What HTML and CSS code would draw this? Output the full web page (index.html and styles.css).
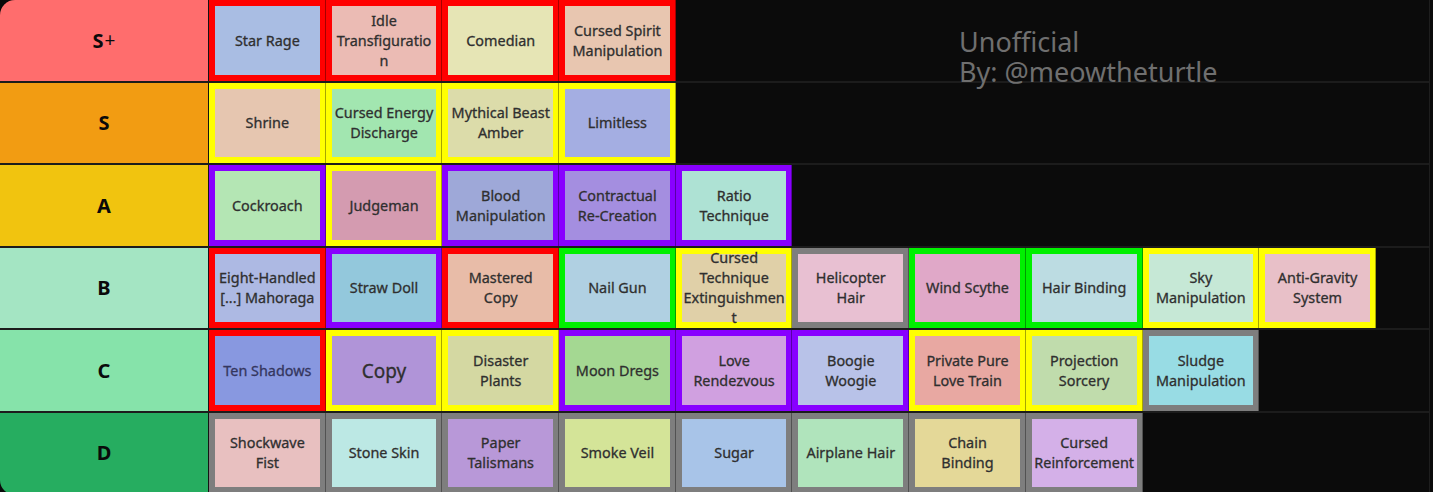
FILE: index.html
```html
<!DOCTYPE html>
<html lang="en">
<head>
<meta charset="utf-8">
<title>Tier List</title>
<link rel="stylesheet" href="styles.css">
</head>
<body>
<div class="board">
  <div class="watermark">
    <div class="wm-line">Unofficial</div>
    <div class="wm-line">By: @meowtheturtle</div>
  </div>

  <div class="row">
    <div class="label l-splus">S<span class="plus">+</span></div>
    <div class="items">
      <div class="tile b-red"><div class="inner t-star-rage">Star Rage</div></div>
      <div class="tile b-red"><div class="inner t-idle">Idle<br>Transfiguratio<br>n</div></div>
      <div class="tile b-red"><div class="inner t-comedian">Comedian</div></div>
      <div class="tile b-red"><div class="inner t-csm">Cursed Spirit<br>Manipulation</div></div>
    </div>
  </div>

  <div class="row">
    <div class="label l-s">S</div>
    <div class="items">
      <div class="tile b-yellow"><div class="inner t-shrine">Shrine</div></div>
      <div class="tile b-yellow"><div class="inner t-ced">Cursed Energy<br>Discharge</div></div>
      <div class="tile b-yellow"><div class="inner t-mba">Mythical Beast<br>Amber</div></div>
      <div class="tile b-yellow"><div class="inner t-limitless">Limitless</div></div>
    </div>
  </div>

  <div class="row">
    <div class="label l-a">A</div>
    <div class="items">
      <div class="tile b-purple"><div class="inner t-cockroach">Cockroach</div></div>
      <div class="tile b-yellow"><div class="inner t-judgeman">Judgeman</div></div>
      <div class="tile b-purple"><div class="inner t-blood">Blood<br>Manipulation</div></div>
      <div class="tile b-purple"><div class="inner t-contract">Contractual<br>Re-Creation</div></div>
      <div class="tile b-purple"><div class="inner t-ratio">Ratio<br>Technique</div></div>
    </div>
  </div>

  <div class="row">
    <div class="label l-b">B</div>
    <div class="items">
      <div class="tile b-red"><div class="inner t-mahoraga">Eight-Handled<br>[...] Mahoraga</div></div>
      <div class="tile b-purple"><div class="inner t-straw">Straw Doll</div></div>
      <div class="tile b-red"><div class="inner t-mastered">Mastered<br>Copy</div></div>
      <div class="tile b-green"><div class="inner t-nail">Nail Gun</div></div>
      <div class="tile b-yellow"><div class="inner t-cte">Cursed<br>Technique<br>Extinguishmen<br>t</div></div>
      <div class="tile b-gray"><div class="inner t-heli">Helicopter<br>Hair</div></div>
      <div class="tile b-green"><div class="inner t-wind">Wind Scythe</div></div>
      <div class="tile b-green"><div class="inner t-hairbind">Hair Binding</div></div>
      <div class="tile b-yellow"><div class="inner t-sky">Sky<br>Manipulation</div></div>
      <div class="tile b-yellow"><div class="inner t-antigrav">Anti-Gravity<br>System</div></div>
    </div>
  </div>

  <div class="row">
    <div class="label l-c">C</div>
    <div class="items">
      <div class="tile b-red"><div class="inner t-ten">Ten Shadows</div></div>
      <div class="tile b-yellow"><div class="inner t-copy">Copy</div></div>
      <div class="tile b-yellow"><div class="inner t-disaster">Disaster<br>Plants</div></div>
      <div class="tile b-purple"><div class="inner t-moon">Moon Dregs</div></div>
      <div class="tile b-purple"><div class="inner t-love">Love<br>Rendezvous</div></div>
      <div class="tile b-purple"><div class="inner t-boogie">Boogie<br>Woogie</div></div>
      <div class="tile b-yellow"><div class="inner t-pplt">Private Pure<br>Love Train</div></div>
      <div class="tile b-yellow"><div class="inner t-proj">Projection<br>Sorcery</div></div>
      <div class="tile b-gray"><div class="inner t-sludge">Sludge<br>Manipulation</div></div>
    </div>
  </div>

  <div class="row">
    <div class="label l-d">D</div>
    <div class="items">
      <div class="tile b-gray"><div class="inner t-shock">Shockwave<br>Fist</div></div>
      <div class="tile b-gray"><div class="inner t-stone">Stone Skin</div></div>
      <div class="tile b-gray"><div class="inner t-paper">Paper<br>Talismans</div></div>
      <div class="tile b-gray"><div class="inner t-smoke">Smoke Veil</div></div>
      <div class="tile b-gray"><div class="inner t-sugar">Sugar</div></div>
      <div class="tile b-gray"><div class="inner t-airplane">Airplane Hair</div></div>
      <div class="tile b-gray"><div class="inner t-chain">Chain<br>Binding</div></div>
      <div class="tile b-gray"><div class="inner t-reinf">Cursed<br>Reinforcement</div></div>
    </div>
  </div>
</div>
</body>
</html>
```

FILE: styles.css
```css
html, body {
  margin: 0;
  padding: 0;
  background: #0a0a0a;
}

.board {
  position: relative;
  width: 1429px;
  height: 495px;
  border-radius: 15px 0 0 15px;
  overflow: hidden;
  border-right: 1px solid #1e1e1e;
  background: #0b0b0b;
  font-family: "Noto Sans", "Open Sans", sans-serif;
}

.watermark {
  position: absolute;
  left: 959px;
  top: 27px;
  display: flex;
  flex-direction: column;
  gap: 1px;
  font-size: 27px;
  line-height: 29px;
  color: #6f6f6f;
  z-index: 2;
}

.row {
  display: flex;
  height: 82.5px;
  box-sizing: border-box;
  border-bottom: 2px solid #1c1c1c;
}

.label {
  flex: none;
  width: 208px;
  border-right: 1px solid #141414;
  display: flex;
  align-items: center;
  justify-content: center;
  font-weight: 700;
  font-size: 20px;
  color: #0a0a0a;
}

.label .plus {
  font-weight: 400;
  font-size: 19px;
  margin-left: 1px;
}

.l-splus { background: #ff6d6d; }
.l-s { background: #f29c12; }
.l-a { background: #f1c40f; }
.l-b { background: #a4e5c3; }
.l-c { background: #86e3aa; }
.l-d { background: #26ad60; }

.items {
  display: flex;
  height: 100%;
}

.tile {
  flex: none;
  width: 116.7px;
  height: 100%;
  box-sizing: border-box;
  padding: 6px 5px 6px 6px;
  border-right: 1px solid rgba(0, 0, 0, 0.35);
}

.b-red { background: #ff0000; }
.b-yellow { background: #ffff00; }
.b-purple { background: #8800ff; }
.b-green { background: #00f000; }
.b-gray { background: #7e7e7e; }

.inner {
  height: 100%;
  display: flex;
  align-items: center;
  justify-content: center;
  text-align: center;
  font-size: 14.4px;
  line-height: 20px;
  padding-top: 1px;
  box-sizing: border-box;
  color: #2f2f2f;
  -webkit-text-stroke: 0.3px #2f2f2f;
  overflow: visible;
  white-space: nowrap;
}

.t-star-rage { background: #a9bde3; }
.t-idle { background: #ebbbb4; }
.t-comedian { background: #e6e5b5; }
.t-csm { background: #e8c6b0; }

.t-shrine { background: #e6c6b0; }
.t-ced { background: #a2e6b0; }
.t-mba { background: #dcdcaa; }
.t-limitless { background: #a4aee2; }

.t-cockroach { background: #b4e6b4; }
.t-judgeman { background: #d49bb0; }
.t-blood { background: #9ea8d8; }
.t-contract { background: #a48ee0; }
.t-ratio { background: #aee2d4; }

.t-mahoraga { background: #adb9e3; }
.t-straw { background: #93c8dc; }
.t-mastered { background: #e8bca8; }
.t-nail { background: #b0d0e2; }
.t-cte { background: #e0d0a8; }
.t-heli { background: #e8c0d2; }
.t-wind { background: #e0a8c8; }
.t-hairbind { background: #bcdce2; }
.t-sky { background: #c6e8d6; }
.t-antigrav { background: #e8c0c8; }

.t-ten { background: #8898e0; color: #34365e; -webkit-text-stroke-color: #34365e; }
.t-copy { background: #b094d8; font-size: 19px; }
.t-disaster { background: #d4d8a2; }
.t-moon { background: #a4d892; }
.t-love { background: #d0a0e0; }
.t-boogie { background: #b8c2e8; }
.t-pplt { background: #e8a8a2; }
.t-proj { background: #c0dcac; }
.t-sludge { background: #98dce4; }

.t-shock { background: #e8c0c0; }
.t-stone { background: #bce8e4; }
.t-paper { background: #b898d8; }
.t-smoke { background: #d4e498; }
.t-sugar { background: #a8c4e8; }
.t-airplane { background: #b0e4bc; }
.t-chain { background: #e4d898; }
.t-reinf { background: #d4b0e8; }
```
